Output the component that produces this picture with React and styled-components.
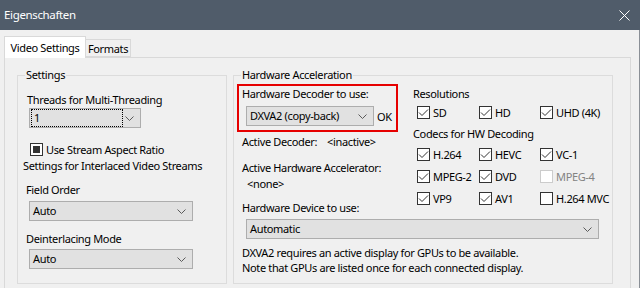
import React from "react";
import styled, { createGlobalStyle } from "styled-components";

const Global = createGlobalStyle`
  html, body { margin: 0; padding: 0; background: #f0f0f0; }
  body {
    font-family: "Noto Sans", "Open Sans", sans-serif;
    font-size: 11px;
    letter-spacing: -0.35px;
    color: #000;
  }
  * { box-sizing: border-box; }
`;

const Window = styled.div`
  width: 640px;
  height: 288px;
  overflow: hidden;
  display: flex;
  flex-direction: column;
  background: #f0f0f0;
`;

const TitleBar = styled.div`
  height: 30px;
  flex: none;
  background: #505c6a;
  color: #fff;
  display: flex;
  align-items: center;
  justify-content: space-between;
  padding: 0 10px 0 4px;
`;

const Title = styled.span`
  font-size: 11.5px;
  line-height: 16px;
`;

const Body = styled.div`
  flex: 1;
  min-height: 0;
  display: flex;
  flex-direction: column;
  padding: 6px 0 0 4px;
  border-right: 1px solid #8a8f96;
`;

const TabRow = styled.div`
  display: flex;
  align-items: flex-end;
  height: 21px;
  flex: none;
  position: relative;
  z-index: 1;
`;

const Tab = styled.div`
  height: ${(p) => (p.$active ? 22 : 18)}px;
  margin-bottom: ${(p) => (p.$active ? -1 : 0)}px;
  width: ${(p) => p.$w}px;
  border: 1px solid #d9d9d9;
  border-bottom: ${(p) => (p.$active ? "none" : "1px solid #d9d9d9")};
  border-left: ${(p) => (p.$active ? "1px solid #d9d9d9" : "none")};
  background: ${(p) => (p.$active ? "#ffffff" : "#f0f0f0")};
  display: flex;
  align-items: center;
  justify-content: center;
  padding-top: ${(p) => (p.$active ? 0 : 2)}px;
  line-height: 16px;
  white-space: nowrap;
`;

const Panel = styled.div`
  flex: 1;
  width: 627px;
  border: 1px solid #d9d9d9;
  border-bottom: none;
  padding: 9px 0 0 12px;
`;

const GroupRow = styled.div`
  display: flex;
  gap: 6px;
  height: 217px;
`;

const Group = styled.fieldset`
  margin: 0;
  padding: 0;
  min-width: 0;
  width: ${(p) => p.$w}px;
  border: 1px solid #dcdcdc;
  display: flex;
  flex-direction: column;
`;

const Legend = styled.legend`
  margin-left: 7px;
  padding: 0 1px;
  line-height: 16px;
`;

const Content = styled.div`
  display: flex;
  flex-direction: column;
  align-items: flex-start;
  padding-left: ${(p) => p.$pl || 0}px;
`;

const Label = styled.div`
  line-height: ${(p) => p.$lh || 16}px;
  margin-top: ${(p) => p.$mt || 0}px;
  margin-left: ${(p) => p.$ml || 0}px;
  white-space: nowrap;
`;

const SelectBox = styled.div`
  width: ${(p) => p.$w}px;
  height: 20px;
  flex: none;
  margin-top: ${(p) => p.$mt || 0}px;
  margin-left: ${(p) => p.$ml || 0}px;
  background: #e1e1e1;
  border: 1px solid #adadad;
  display: flex;
  align-items: center;
  justify-content: space-between;
  padding: 0 6px 0 ${(p) => (p.$focus ? 2 : 3)}px;
  line-height: 16px;
  white-space: nowrap;
`;

const SelectText = styled.span`
  display: flex;
  align-items: center;
  height: 16px;
  padding-left: ${(p) => (p.$focus ? 2 : 0)}px;
  width: ${(p) => (p.$focus ? "90px" : "auto")};
  outline: ${(p) => (p.$focus ? "1px dotted #000" : "none")};
`;

const Chevron = () => (
  <svg width="9" height="5" viewBox="0 0 9 5">
    <path d="M0.5 0.5 L4.5 4.5 L8.5 0.5" fill="none" stroke="#5a5a5a" strokeWidth="1" />
  </svg>
);

const Select = ({ w, mt, ml, children, focus }) => (
  <SelectBox $w={w} $mt={mt} $ml={ml} $focus={focus}>
    <SelectText $focus={focus}>{children}</SelectText>
    <Chevron />
  </SelectBox>
);

const CheckRowBox = styled.div`
  display: flex;
  align-items: center;
  height: 16px;
  margin-top: ${(p) => p.$mt || 0}px;
  margin-left: ${(p) => p.$ml || 0}px;
  white-space: nowrap;
  color: ${(p) => (p.$disabled ? "#838383" : "#000")};
`;

const Box = styled.span`
  width: 13px;
  height: 13px;
  flex: none;
  border: 1px solid ${(p) => (p.$disabled ? "#cccccc" : "#333333")};
  background: #fff;
  margin-right: 3px;
  display: flex;
  align-items: center;
  justify-content: center;
`;

const Mark = styled.span`
  width: 7px;
  height: 7px;
  background: #333;
`;

const Check = ({ state = "checked", disabled, mt, ml, children }) => (
  <CheckRowBox $mt={mt} $ml={ml} $disabled={disabled}>
    <Box $disabled={disabled}>
      {state === "checked" && (
        <svg width="11" height="11" viewBox="0 0 11 11">
          <polyline points="1,5.5 4,8.5 10,2.5" fill="none" stroke="#333" strokeWidth="1" />
        </svg>
      )}
      {state === "mixed" && <Mark />}
    </Box>
    {children}
  </CheckRowBox>
);

const HwTop = styled.div`
  display: flex;
  gap: 15px;
  padding-left: 3px;
  margin-top: 1px;
`;

const HwLeft = styled.div`
  width: 161px;
  flex: none;
  display: flex;
  flex-direction: column;
  align-items: flex-start;
`;

const RedBox = styled.div`
  width: 161px;
  height: 48px;
  border: 2px solid #e60000;
  padding: 0 0 0 3px;
  display: flex;
  flex-direction: column;
  align-items: flex-start;
`;

const ComboLine = styled.div`
  display: flex;
  align-items: center;
  gap: 3px;
  margin-top: 5px;
  margin-left: 4px;
`;

const InfoLine = styled.div`
  display: flex;
  line-height: 16px;
  margin-top: ${(p) => p.$mt || 0}px;
  margin-left: 5px;
  white-space: nowrap;
`;

const InfoKey = styled.span`
  width: 85px;
  flex: none;
`;

const HwRight = styled.div`
  display: flex;
  flex-direction: column;
  align-items: flex-start;
`;

const CheckGrid = styled.div`
  display: grid;
  grid-template-columns: 62px 61px auto;
  row-gap: 6px;
  margin-top: ${(p) => p.$mt || 0}px;
  margin-left: 4px;
`;

const Notes = styled.div`
  margin-top: 6px;
  margin-left: 8px;
  line-height: 15px;
  white-space: nowrap;
`;

const CloseIcon = () => (
  <svg width="11" height="11" viewBox="0 0 11 11">
    <path d="M0.5 0.5 L10.5 10.5 M10.5 0.5 L0.5 10.5" stroke="#fff" strokeWidth="1" />
  </svg>
);

export default function App() {
  return (
    <>
      <Global />
      <Window>
        <TitleBar>
          <Title>Eigenschaften</Title>
          <CloseIcon />
        </TitleBar>
        <Body>
          <TabRow>
            <Tab $active $w={82}>Video Settings</Tab>
            <Tab $w={45}>Formats</Tab>
          </TabRow>
          <Panel>
            <GroupRow>
              <Group $w={210}>
                <Legend>Settings</Legend>
                <Content $pl={8}>
                  <Label $mt={9} $ml={1}>Threads for Multi-Threading</Label>
                  <Select w={112} ml={3} focus>1</Select>
                  <Check state="mixed" mt={13} ml={4}>Use Stream Aspect Ratio</Check>
                  <Label $mt={1} $ml={-3}>Settings for Interlaced Video Streams</Label>
                  <Label $mt={8}>Field Order</Label>
                  <Select w={164} ml={3} mt={3}>Auto</Select>
                  <Label $mt={10}>Deinterlacing Mode</Label>
                  <Select w={164} ml={3} mt={2}>Auto</Select>
                </Content>
              </Group>
              <Group $w={380}>
                <Legend>Hardware Acceleration</Legend>
                <HwTop>
                  <HwLeft>
                    <RedBox>
                      <Label $lh={15}>Hardware Decoder to use:</Label>
                      <ComboLine>
                        <Select w={128}>DXVA2 (copy-back)</Select>
                        <span>OK</span>
                      </ComboLine>
                    </RedBox>
                    <InfoLine $mt={2}>
                      <InfoKey>Active Decoder:</InfoKey>
                      <span>&lt;inactive&gt;</span>
                    </InfoLine>
                    <InfoLine $mt={10}>Active Hardware Accelerator:</InfoLine>
                    <Label $ml={10}>&lt;none&gt;</Label>
                    <InfoLine $mt={8}>Hardware Device to use:</InfoLine>
                  </HwLeft>
                  <HwRight>
                    <Label $mt={2}>Resolutions</Label>
                    <CheckGrid $mt={2}>
                      <Check>SD</Check>
                      <Check>HD</Check>
                      <Check>UHD (4K)</Check>
                    </CheckGrid>
                    <Label $mt={6}>Codecs for HW Decoding</Label>
                    <CheckGrid $mt={4}>
                      <Check>H.264</Check>
                      <Check>HEVC</Check>
                      <Check>VC-1</Check>
                      <Check>MPEG-2</Check>
                      <Check>DVD</Check>
                      <Check state="unchecked" disabled>MPEG-4</Check>
                      <Check>VP9</Check>
                      <Check>AV1</Check>
                      <Check state="unchecked">H.264 MVC</Check>
                    </CheckGrid>
                  </HwRight>
                </HwTop>
                <Select w={353} ml={12} mt={3}>Automatic</Select>
                <Notes>
                  DXVA2 requires an active display for GPUs to be available.
                  <br />
                  Note that GPUs are listed once for each connected display.
                </Notes>
              </Group>
            </GroupRow>
          </Panel>
        </Body>
      </Window>
    </>
  );
}
